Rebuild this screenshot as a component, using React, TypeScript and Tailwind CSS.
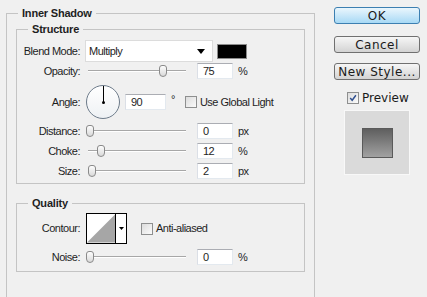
import React from 'react'

const label = "text-[11px] tracking-[-0.5px] text-[#1e1e1e]"

const NumBox = ({ value, w = 'w-[36px]' }: { value: string; w?: string }) => (
  <div className={`${w} h-[16px] bg-white border border-t-[#abadb3] border-l-[#dbdfe6] border-r-[#e3e9ef] border-b-[#e3e9ef] pl-[5px] leading-[14px] ${label}`}>
    {value}
  </div>
)

const Slider = ({ thumb }: { thumb: number }) => (
  <div className="relative w-[101px] h-[16px]">
    <div className="absolute left-[3px] right-0 top-[7px] h-[1px] bg-[#a7a7a7]" />
    <div className="absolute left-[3px] right-0 top-[8px] h-[1px] bg-white" />
    <div
      className="absolute top-[2px] w-[8px] h-[12px] rounded-t-[3px] rounded-b-[4px] border border-[#8a8a8a] bg-gradient-to-b from-[#fdfdfd] to-[#d9d9d9]"
      style={{ left: thumb }}
    />
  </div>
)

const Row = ({ name, children, className = '' }: { name: string; children: React.ReactNode; className?: string }) => (
  <div className={`flex items-center ${className}`}>
    <div className={`w-[63px] text-right ${label}`}>{name}</div>
    <div className="ml-[5px] flex items-center">{children}</div>
  </div>
)

const SliderRow = ({ name, thumb, value, unit, className = '' }: { name: string; thumb: number; value: string; unit: string; className?: string }) => (
  <Row name={name} className={`h-[16px] ${className}`}>
    <Slider thumb={thumb} />
    <div className="ml-[11px]"><NumBox value={value} /></div>
    <span className={`ml-[5px] ${label}`}>{unit}</span>
  </Row>
)

const Checkbox = ({ checked = false }: { checked?: boolean }) => (
  <div className="w-[12px] h-[12px] border border-[#8e8f8f] bg-gradient-to-br from-[#dcdcdc] to-[#fbfbfb] p-[1px] flex items-center justify-center">
    {checked && (
      <svg width="10" height="10" viewBox="0 0 10 10">
        <path d="M1.5 5 L4 7.8 L8.6 1.6" fill="none" stroke="#2f4f8f" strokeWidth="1.8" />
      </svg>
    )}
  </div>
)

const Button = ({ text, primary = false, className = '' }: { text: string; primary?: boolean; className?: string }) => (
  <div
    className={`w-[86px] h-[17px] rounded-[3px] border flex items-center justify-center text-[12px] tracking-[0.5px] text-[#1a1a1a] font-['DejaVu_Sans',sans-serif] ${
      primary
        ? 'border-[#3c7fb1] bg-gradient-to-b from-[#eaf6fd] to-[#a7d9f5]'
        : 'border-[#707070] bg-gradient-to-b from-[#f6f6f6] via-[#e5e5e5] to-[#d3d3d3]'
    } ${className}`}
  >
    {text}
  </div>
)

export default function App() {
  return (
    <div className="w-[427px] h-[297px] overflow-hidden bg-[#f0f0f0] flex font-['Liberation_Sans',Arial,sans-serif]">
      <div className="w-[316px] pl-[6px] pt-[6px] shrink-0">
        <fieldset className="w-[309px] h-[320px] border border-[#c4c4c4] p-0 m-0">
          <legend className="ml-[11px] px-[4px] text-[11px] font-bold tracking-[-0.2px] leading-[14px] text-[#1e1e1e]">Inner Shadow</legend>
          <div className="px-[9px] pt-[2px]">
            <fieldset className="border border-[#c4c4c4] p-0 m-0">
              <legend className="ml-[11px] px-[4px] text-[11px] font-bold tracking-[-0.2px] leading-[14px] text-[#1e1e1e]">Structure</legend>
              <div className="pt-[4px] pb-[4px] flex flex-col">
                <Row name="Blend Mode:" className="h-[22px]">
                  <div className="w-[128px] h-[22px] bg-white border border-[#dcdcdc] flex items-center justify-between pl-[3px] pr-[7px]">
                    <span className={label}>Multiply</span>
                    <svg width="8" height="5" viewBox="0 0 8 5"><path d="M0 0 H8 L4 5 Z" fill="#000" /></svg>
                  </div>
                  <div className="ml-[4px] w-[30px] h-[15px] bg-black border border-[#8c8c8c]" />
                </Row>
                <SliderRow name="Opacity:" thumb={74} value="75" unit="%" className="mt-[1px]" />
                <Row name="Angle:" className="h-[34px] mt-[6px]">
                  <div className="relative ml-[1px] w-[34px] h-[34px] rounded-full border border-[#6d7b8a] bg-gradient-to-b from-white to-[#eef1f4]">
                    <div className="absolute left-[16px] top-0 w-[1px] h-[17px] bg-black" />
                    <div className="absolute left-[15px] top-[15px] w-[3px] h-[3px] rounded-full bg-black" />
                  </div>
                  <div className="ml-[5px]"><NumBox value="90" w="w-[41px]" /></div>
                  <span className={`ml-[5px] -mt-[5px] ${label}`}>°</span>
                  <div className="ml-[10px]"><Checkbox /></div>
                  <span className={`ml-[3px] ${label}`}>Use Global Light</span>
                </Row>
                <SliderRow name="Distance:" thumb={1} value="0" unit="px" className="mt-[4px]" />
                <SliderRow name="Choke:" thumb={12} value="12" unit="%" className="mt-[4px]" />
                <SliderRow name="Size:" thumb={3} value="2" unit="px" className="mt-[4px]" />
              </div>
            </fieldset>

            <fieldset className="mt-[12px] border border-[#c4c4c4] p-0 m-0">
              <legend className="ml-[11px] px-[4px] text-[11px] font-bold tracking-[-0.2px] leading-[14px] text-[#1e1e1e]">Quality</legend>
              <div className="pt-[3px] pb-[6px] flex flex-col">
                <Row name="Contour:" className="h-[31px]">
                  <div className="ml-[1px] w-[41px] h-[31px] border border-black bg-white flex">
                    <svg width="29" height="29" viewBox="0 0 29 29" className="border-r border-black">
                      <polygon points="0,29 29,0 29,29" fill="#a6a6a6" />
                    </svg>
                    <div className="flex-1 flex items-center justify-center">
                      <svg width="5" height="3" viewBox="0 0 5 3"><path d="M0 0 H5 L2.5 3 Z" fill="#000" /></svg>
                    </div>
                  </div>
                  <div className="ml-[14px]"><Checkbox /></div>
                  <span className={`ml-[3px] ${label}`}>Anti-aliased</span>
                </Row>
                <SliderRow name="Noise:" thumb={1} value="0" unit="%" className="mt-[5px]" />
              </div>
            </fieldset>
          </div>
        </fieldset>
      </div>

      <div className="pl-[18px] pt-[7px] flex flex-col">
        <Button text="OK" primary />
        <Button text="Cancel" className="mt-[12px]" />
        <Button text="New Style..." className="mt-[10px]" />
        <div className="mt-[11px] ml-[13px] flex items-center h-[13px]">
          <Checkbox checked />
          <span className="ml-[3px] text-[12px] text-[#1a1a1a] font-['DejaVu_Sans',sans-serif]">Preview</span>
        </div>
        <div className="mt-[6px] ml-[10px] w-[66px] h-[65px] border border-[#f8f8f8] bg-[#dadada] flex items-center justify-center">
          <div className="w-[31px] h-[30px] border border-[#5a5a5a] bg-gradient-to-b from-[#5f5f5f] to-[#a2a2a2]" />
        </div>
      </div>
    </div>
  )
}
